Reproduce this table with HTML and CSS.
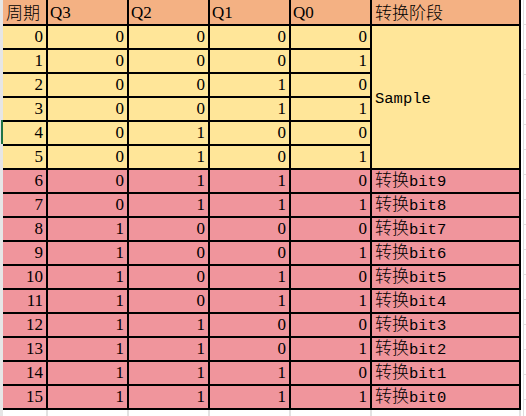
FILE: index.html
```html
<!DOCTYPE html>
<html lang="zh">
<head>
<meta charset="utf-8">
<title>转换阶段</title>
<link rel="stylesheet" href="styles.css">
</head>
<body>
<div class="sheet">
  <div class="rowhdr"><div class="mark"></div></div>
  <div class="main">
    <div class="grid">
      <div class="c hd"><span class="zh">周期</span></div>
      <div class="c hd lat">Q3</div>
      <div class="c hd lat">Q2</div>
      <div class="c hd lat">Q1</div>
      <div class="c hd lat">Q0</div>
      <div class="c hd"><span class="zh">转换阶段</span></div>

      <div class="c y n">0</div><div class="c y n">0</div><div class="c y n">0</div><div class="c y n">0</div><div class="c y n">0</div>
      <div class="c y txt sample">Sample</div>
      <div class="c y n">1</div><div class="c y n">0</div><div class="c y n">0</div><div class="c y n">0</div><div class="c y n">1</div>
      <div class="c y n">2</div><div class="c y n">0</div><div class="c y n">0</div><div class="c y n">1</div><div class="c y n">0</div>
      <div class="c y n">3</div><div class="c y n">0</div><div class="c y n">0</div><div class="c y n">1</div><div class="c y n">1</div>
      <div class="c y n">4</div><div class="c y n">0</div><div class="c y n">1</div><div class="c y n">0</div><div class="c y n">0</div>
      <div class="c y n">5</div><div class="c y n">0</div><div class="c y n">1</div><div class="c y n">0</div><div class="c y n">1</div>

      <div class="c p n">6</div><div class="c p n">0</div><div class="c p n">1</div><div class="c p n">1</div><div class="c p n">0</div><div class="c p txt"><span class="zh">转换</span>bit9</div>
      <div class="c p n">7</div><div class="c p n">0</div><div class="c p n">1</div><div class="c p n">1</div><div class="c p n">1</div><div class="c p txt"><span class="zh">转换</span>bit8</div>
      <div class="c p n">8</div><div class="c p n">1</div><div class="c p n">0</div><div class="c p n">0</div><div class="c p n">0</div><div class="c p txt"><span class="zh">转换</span>bit7</div>
      <div class="c p n">9</div><div class="c p n">1</div><div class="c p n">0</div><div class="c p n">0</div><div class="c p n">1</div><div class="c p txt"><span class="zh">转换</span>bit6</div>
      <div class="c p n">10</div><div class="c p n">1</div><div class="c p n">0</div><div class="c p n">1</div><div class="c p n">0</div><div class="c p txt"><span class="zh">转换</span>bit5</div>
      <div class="c p n">11</div><div class="c p n">1</div><div class="c p n">0</div><div class="c p n">1</div><div class="c p n">1</div><div class="c p txt"><span class="zh">转换</span>bit4</div>
      <div class="c p n">12</div><div class="c p n">1</div><div class="c p n">1</div><div class="c p n">0</div><div class="c p n">0</div><div class="c p txt"><span class="zh">转换</span>bit3</div>
      <div class="c p n">13</div><div class="c p n">1</div><div class="c p n">1</div><div class="c p n">0</div><div class="c p n">1</div><div class="c p txt"><span class="zh">转换</span>bit2</div>
      <div class="c p n">14</div><div class="c p n">1</div><div class="c p n">1</div><div class="c p n">1</div><div class="c p n">0</div><div class="c p txt"><span class="zh">转换</span>bit1</div>
      <div class="c p n">15</div><div class="c p n">1</div><div class="c p n">1</div><div class="c p n">1</div><div class="c p n">1</div><div class="c p txt"><span class="zh">转换</span>bit0</div>
    </div>
    <div class="foot">
      <div></div><div></div><div></div><div></div><div></div><div></div>
    </div>
  </div>
  <div class="edge"></div>
</div>
</body>
</html>
```

FILE: styles.css
```css
html, body {
  margin: 0;
  padding: 0;
  background: #ffffff;
}

.sheet {
  display: flex;
  width: 526px;
  height: 416px;
  overflow: hidden;
}

.rowhdr {
  width: 3px;
  flex: none;
  background: #e6e6e6;
  display: flex;
  flex-direction: column;
  padding-top: 120px;
  box-sizing: border-box;
}

.mark {
  width: 2px;
  height: 24px;
  margin-left: 1px;
  background: #217346;
}

.main {
  display: flex;
  flex-direction: column;
  flex: none;
}

.grid {
  display: grid;
  grid-template-columns: 43px 79px 79px 79px 79px 147px;
  grid-template-rows: 24px repeat(16, 22px);
  gap: 2px;
  background: #000000;
  border-right: 2px solid #000000;
  border-bottom: 2px solid #000000;
}

.c {
  color: #000000;
  white-space: nowrap;
  min-width: 0;
}

.hd {
  background: #f4b183;
  font-family: "Liberation Serif", serif;
  font-size: 16px;
  line-height: 21px;
  padding: 3px 0 0 3px;
  box-sizing: border-box;
}

.y { background: #ffe699; }
.p { background: #f0959c; }

.n {
  font-family: "Liberation Serif", serif;
  font-size: 17px;
  line-height: 22px;
  text-align: right;
  padding-right: 3px;
}

.hd.lat {
  font-size: 17px;
  padding-left: 2px;
  padding-top: 2px;
}

.txt {
  font-family: "Liberation Mono", monospace;
  font-size: 15.5px;
  line-height: 22px;
  padding-left: 3px;
}

.zh {
  display: inline-block;
  font-family: "Noto Sans CJK SC", sans-serif;
  font-size: 17px;
  font-weight: 300;
  line-height: 17px;
}

.sample {
  grid-column: 6;
  grid-row: 2 / span 6;
  display: flex;
  align-items: center;
  padding-top: 4px;
  box-sizing: border-box;
}

.foot {
  display: grid;
  grid-template-columns: 43px 79px 79px 79px 79px 147px;
  column-gap: 2px;
  height: 6px;
  background: #e2e2e2;
}

.foot div {
  background: #ffffff;
}

.edge {
  flex: 1;
  margin-left: 2px;
  border-left: 1px solid #dedede;
  background: repeating-linear-gradient(to bottom, #ffffff 0, #ffffff 24px, #e0e0e0 24px, #e0e0e0 25px);
}
```
